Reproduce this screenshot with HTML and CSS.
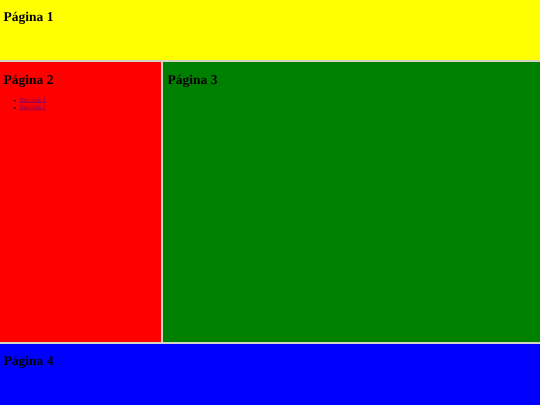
FILE: index.html
```html
<!DOCTYPE html>
<html lang="es">
<head>
<meta charset="utf-8">
<title>Páginas</title>
<link rel="stylesheet" href="styles.css">
</head>
<body>
<div class="frames">
  <section class="frame top"><h2>Página 1</h2></section>
  <div class="middle">
    <section class="frame side">
      <h2>Página 2</h2>
      <ul>
        <li><a href="#s1">Sección 1</a></li>
        <li><a href="#s2">Sección 2</a></li>
      </ul>
    </section>
    <section class="frame main"><h2>Página 3</h2></section>
  </div>
  <section class="frame bottom"><h2>Página 4</h2></section>
</div>
</body>
</html>
```
FILE: styles.css
```css
html, body {
  margin: 0;
  height: 100%;
  overflow: hidden;
}
body {
  font-family: "Liberation Serif", "Times New Roman", serif;
  color: #000;
  text-rendering: geometricPrecision;
}
.frames {
  display: grid;
  grid-template-rows: 60px 1fr 61px;
  gap: 2px;
  height: 405px;
  background: #d4d4c4;
}
.middle {
  display: grid;
  grid-template-columns: 161px 1fr;
  gap: 2px;
  min-height: 0;
}
.frame {
  padding: 9px 3.5px 0;
  overflow: hidden;
}
.frame h2 {
  margin: 0;
  font-size: 13.5px;
  line-height: 15px;
  font-weight: bold;
  filter: blur(0.35px);
}
.top { background: #ff0; }
.side { background: #f00; padding-top: 9.5px; }
.main { background: #008000; padding-top: 9.5px; padding-left: 4.5px; }
.bottom { background: #00f; }
ul {
  margin: 10px 0 0;
  padding: 0 0 0 15px;
  list-style: none;
  font-size: 10px;
  line-height: 10.8px;
  transform: scale(0.66);
  transform-origin: 0 0;
  filter: blur(0.3px);
}
li {
  display: flex;
  align-items: center;
  gap: 6px;
}
li::before {
  content: "";
  width: 3px;
  height: 3px;
  border-radius: 50%;
  background: #400;
}
a { color: #700070; }
```
